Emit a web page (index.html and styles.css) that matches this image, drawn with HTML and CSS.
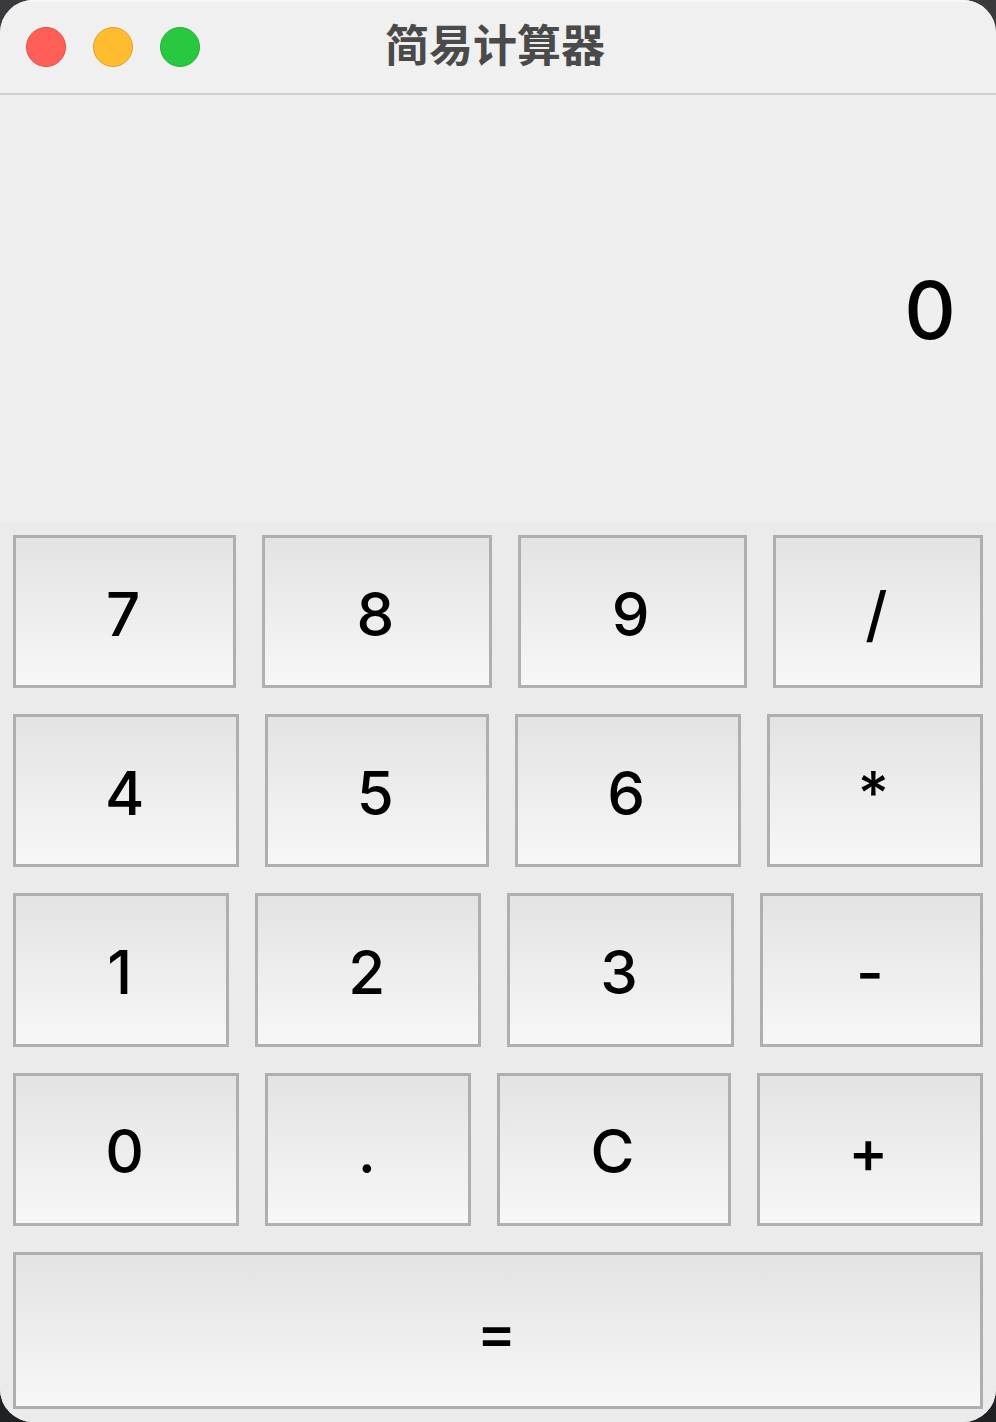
FILE: index.html
```html
<!DOCTYPE html>
<html lang="zh-CN">
<head>
    <meta charset="UTF-8">
    <meta name="viewport" content="width=device-width, initial-scale=1">
    <title>简易计算器</title>
    <link rel="stylesheet" href="styles.css">
</head>
<body>
    <main class="window">
        <!-- title bar with window controls -->
        <header class="titlebar">
            <div class="controls">
                <button type="button" class="dot close" aria-label="关闭"></button>
                <button type="button" class="dot minimize" aria-label="最小化"></button>
                <button type="button" class="dot maximize" aria-label="最大化"></button>
            </div>
            <h1>简易计算器</h1>
        </header>

        <output class="display">0</output>

        <!-- every row has its own column widths -->
        <div class="keypad">
            <div class="row row-7">
                <button type="button">7</button>
                <button type="button">8</button>
                <button type="button">9</button>
                <button type="button">/</button>
            </div>
            <div class="row row-4">
                <button type="button">4</button>
                <button type="button">5</button>
                <button type="button">6</button>
                <button type="button">*</button>
            </div>
            <div class="row row-1">
                <button type="button">1</button>
                <button type="button">2</button>
                <button type="button">3</button>
                <button type="button">-</button>
            </div>
            <div class="row row-0">
                <button type="button">0</button>
                <button type="button">.</button>
                <button type="button">C</button>
                <button type="button">+</button>
            </div>
            <div class="row">
                <button type="button">=</button>
            </div>
        </div>
    </main>
</body>
</html>
```

FILE: styles.css
```css
* {
    box-sizing: border-box;
}

body {
    margin: 0;
    background: linear-gradient(#3a3a3c, #202124);
    font-family: Inter, "Noto Sans CJK SC", sans-serif;
    color: #000;
}

.window {
    display: grid;
    grid-template-rows: auto 427fr 900fr;
    min-height: 100vh;
    background: #efefef;
    border-radius: 33px;
    overflow: hidden;
}

/* title bar */
.titlebar {
    display: grid;
    grid-template-columns: 1fr auto 1fr;
    align-items: center;
    height: 95px;
    padding: 0 32px 2px 26px;
    background: #f0f0f0;
    border-top: 2px solid #f7f7f7;
    border-bottom: 2px solid #cecece;
}

.controls {
    display: flex;
    gap: 27px;
}

.dot {
    width: 40px;
    height: 40px;
    padding: 0;
    border: 1px solid;
    border-radius: 50%;
}

.close {
    background: #ff5f57;
    border-color: #e94b45;
}

.minimize {
    background: #febc2e;
    border-color: #e0a028;
}

.maximize {
    background: #28c840;
    border-color: #24b236;
}

.titlebar h1 {
    margin: 0;
    padding-bottom: 8px;
    font-family: "Noto Sans CJK SC", sans-serif;
    font-size: 44px;
    line-height: 60px;
    font-weight: 700;
    color: #4a4a4a;
}

/* result */
.display {
    display: flex;
    align-items: center;
    justify-content: flex-end;
    padding: 2px 40px 0;
    font-size: 80px;
    line-height: 96px;
    font-weight: 450;
}

/* keys */
.keypad {
    display: grid;
    grid-template-rows: repeat(4, 153fr) 157fr;
    gap: 26px;
    padding: 13px;
    background: #ebebeb;
}

.row {
    display: grid;
    gap: 26px;
}

.row-7 {
    grid-template-columns: 223fr 229fr 229fr 210fr;
}

.row-4 {
    grid-template-columns: 226fr 223fr 226fr 216fr;
}

.row-1 {
    grid-template-columns: 216fr 226fr 226fr 223fr;
}

.row-0 {
    grid-template-columns: 226fr 206fr 233fr 226fr;
}

.row button {
    padding: 4px 3px 0 0;
    border: 3px solid #afafaf;
    background: linear-gradient(#e3e3e3, #f7f7f7);
    font-family: inherit;
    font-size: 60px;
    line-height: 72px;
    font-weight: 450;
    color: #000;
}
```
